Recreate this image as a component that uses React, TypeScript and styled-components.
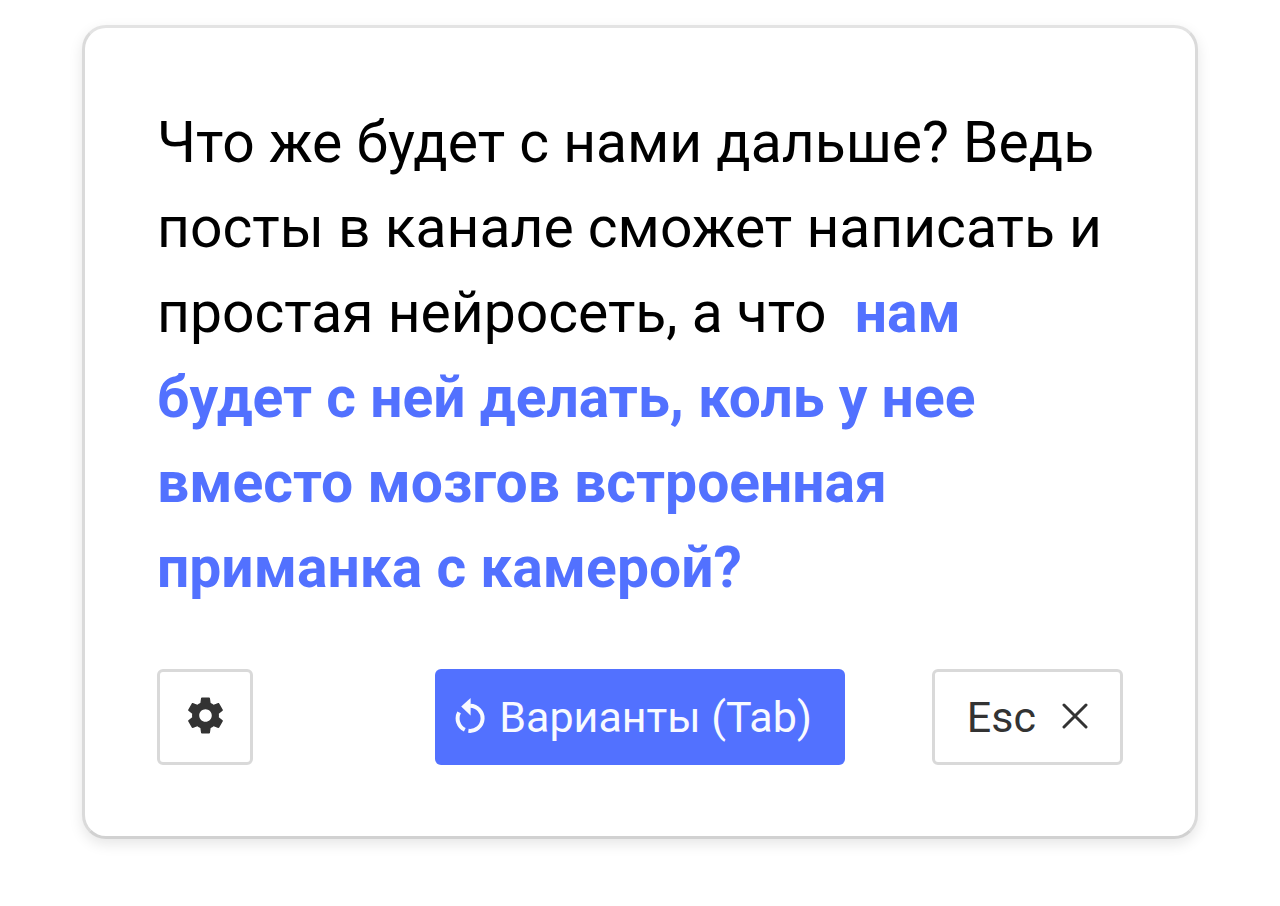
import React from "react";
import styled, { createGlobalStyle, css } from "styled-components";

const GlobalStyle = createGlobalStyle`
  *, *::before, *::after { box-sizing: border-box; }
  body {
    margin: 0;
    background: #fff;
    color: #000;
    font-family: Roboto, "Liberation Sans", sans-serif;
  }
`;

const Page = styled.main`
  padding: 25px 82px;
`;

const Card = styled.section`
  padding: 72px 72px 71px;
  background: #fff;
  border: 3px solid #dadada;
  border-top-color: #e3e3e3;
  border-bottom-color: #d1d1d1;
  border-radius: 24px;
  box-shadow: 0 5px 14px rgba(0, 0, 0, 0.1);
`;

const Message = styled.p`
  margin: 0;
  font-size: 57px;
  line-height: 85px;
`;

const Generated = styled.strong`
  color: #5271ff;
  font-weight: 700;
`;

const Actions = styled.div`
  display: flex;
  gap: 87px;
  margin-top: 59px;
`;

const Button = styled.button<{ $variant?: "primary" | "square" }>`
  display: flex;
  align-items: center;
  justify-content: center;
  gap: 26px;
  height: 96px;
  padding: 0 32px;
  border: 3px solid #d9d9d9;
  border-radius: 6px;
  background: #fff;
  color: #333;
  font-family: inherit;
  font-size: 43px;
  line-height: 52px;
  white-space: nowrap;
  cursor: pointer;

  ${({ $variant }) =>
    $variant === "square" &&
    css`
      width: 96px;
      margin-right: auto;
      padding: 0;
    `}

  ${({ $variant }) =>
    $variant === "primary" &&
    css`
      gap: 12px;
      padding: 0 33px 0 20px;
      border: 0;
      background: #5271ff;
      color: #f8faff;
    `}
`;

const Icon = styled.svg`
  flex: none;
  margin-bottom: 3px;
`;

function GearIcon() {
  return (
    <Icon width="43" height="43" viewBox="0 0 24 24" fill="currentColor" aria-hidden="true">
      <path d="M19.43 12.98c.04-.32.07-.64.07-.98s-.03-.66-.07-.98l2.11-1.65c.19-.15.24-.42.12-.64l-2-3.46c-.12-.22-.39-.3-.61-.22l-2.49 1c-.52-.4-1.08-.73-1.69-.98l-.38-2.65C14.46 2.18 14.25 2 14 2h-4c-.25 0-.46.18-.49.42l-.38 2.65c-.61.25-1.17.59-1.69.98l-2.49-1c-.23-.09-.49 0-.61.22l-2 3.46c-.13.22-.07.49.12.64l2.11 1.65c-.04.32-.07.65-.07.98s.03.66.07.98l-2.11 1.65c-.19.15-.24.42-.12.64l2 3.46c.12.22.39.3.61.22l2.49-1c.52.4 1.08.73 1.69.98l.38 2.65c.03.24.24.42.49.42h4c.25 0 .46-.18.49-.42l.38-2.65c.61-.25 1.17-.59 1.69-.98l2.49 1c.23.09.49 0 .61-.22l2-3.46c.12-.22.07-.49-.12-.64l-2.11-1.65zM12 15.5c-1.93 0-3.5-1.57-3.5-3.5s1.57-3.5 3.5-3.5 3.5 1.57 3.5 3.5-1.57 3.5-3.5 3.5z" />
    </Icon>
  );
}

function RestartIcon() {
  return (
    <Icon width="32" height="38" viewBox="0 0 32 38" fill="none" aria-hidden="true">
      <path
        d="M15.2 8.7A12.6 12.6 0 1 1 13.4 33.8M9.8 32.7A12.6 12.6 0 0 1 4.1 15.4"
        stroke="currentColor"
        strokeWidth="4"
      />
      <path d="M6.2 9.4L15.6 1V18.4Z" fill="currentColor" />
    </Icon>
  );
}

function CloseIcon() {
  return (
    <Icon width="26" height="26" viewBox="0 0 26 26" fill="none" aria-hidden="true">
      <path
        d="M2 2L24 24M24 2L2 24"
        stroke="currentColor"
        strokeWidth="3"
        strokeLinecap="round"
      />
    </Icon>
  );
}

export default function App() {
  return (
    <>
      <GlobalStyle />
      <Page>
        <Card>
          <Message>
            Что же будет с нами дальше? Ведь посты в канале сможет написать и
            простая нейросеть, а что&nbsp;{" "}
            <Generated>
              нам будет с ней делать, коль у нее вместо мозгов встроенная
              приманка с камерой?
            </Generated>
          </Message>
          <Actions>
            <Button type="button" $variant="square" aria-label="Настройки">
              <GearIcon />
            </Button>
            <Button type="button" $variant="primary">
              <RestartIcon />
              Варианты (Tab)
            </Button>
            <Button type="button">
              Esc
              <CloseIcon />
            </Button>
          </Actions>
        </Card>
      </Page>
    </>
  );
}
